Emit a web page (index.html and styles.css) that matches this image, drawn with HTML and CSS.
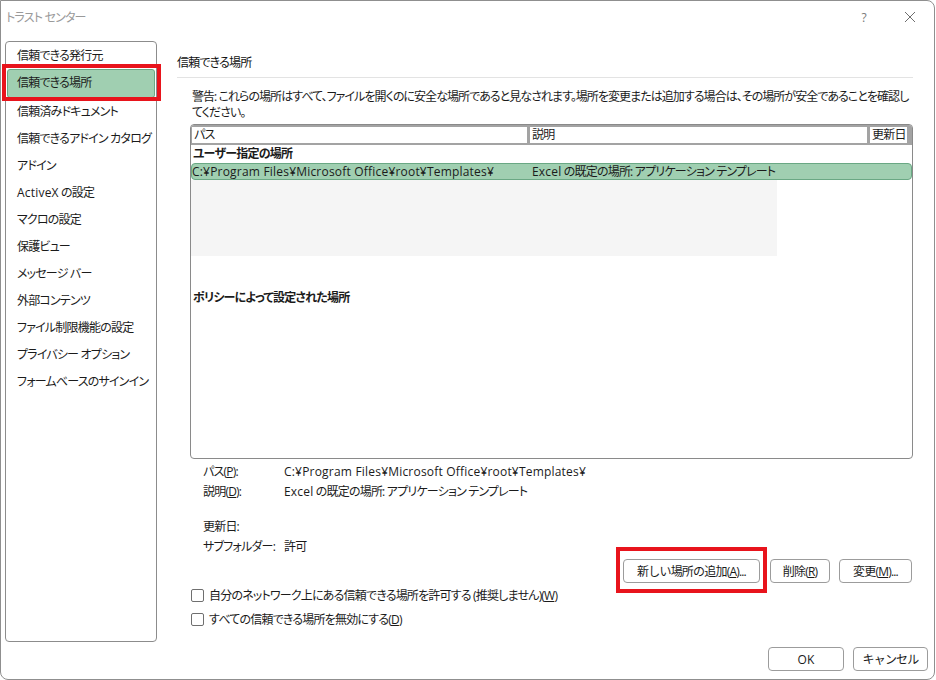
FILE: index.html
```html
<!DOCTYPE html>
<html lang="ja">
<head>
    <meta charset="UTF-8">
    <title>トラスト センター</title>
    <link rel="stylesheet" href="styles.css">
</head>
<body>
    <div class="dialog">
        <div class="titlebar">
            <span class="title">トラスト センター</span>
            <span class="help">?</span>
            <svg class="close" width="12" height="12" viewBox="0 0 12 12">
                <path d="M1 1 L11 11 M11 1 L1 11" stroke="#6e6e6e" stroke-width="1" fill="none"/>
            </svg>
        </div>

        <div class="content">
            <div class="nav">
                <div class="nav-item">信頼できる発行元</div>
                <div class="nav-item selected">信頼できる場所</div>
                <div class="nav-item">信頼済みドキュメント</div>
                <div class="nav-item">信頼できるアドイン カタログ</div>
                <div class="nav-item">アドイン</div>
                <div class="nav-item"><span class="latin">ActiveX</span> の設定</div>
                <div class="nav-item">マクロの設定</div>
                <div class="nav-item">保護ビュー</div>
                <div class="nav-item">メッセージ バー</div>
                <div class="nav-item">外部コンテンツ</div>
                <div class="nav-item">ファイル制限機能の設定</div>
                <div class="nav-item">プライバシー オプション</div>
                <div class="nav-item">フォームベースのサインイン</div>
            </div>

            <div class="main">
                <div class="section-title">信頼できる場所</div>
                <div class="section-body">
                    <p class="warning">警告: これらの場所はすべて、ファイルを開くのに安全な場所であると見なされます。場所を変更または追加する場合は、その場所が安全であることを確認し<br>てください。</p>

                    <div class="list">
                        <div class="list-header">
                            <div class="col">パス</div>
                            <div class="col">説明</div>
                            <div class="col">更新日</div>
                        </div>
                        <div class="group">ユーザー指定の場所</div>
                        <div class="row selected">
                            <span class="cell-path latin">C:¥Program Files¥Microsoft Office¥root¥Templates¥</span>
                            <span class="cell-desc"><span class="latin">Excel</span> の既定の場所: アプリケーション テンプレート</span>
                        </div>
                        <div class="blank"></div>
                        <div class="group policy">ポリシーによって設定された場所</div>
                    </div>

                    <div class="details">
                        <span>パス(<u>P</u>):</span>
                        <span class="latin">C:¥Program Files¥Microsoft Office¥root¥Templates¥</span>
                        <span>説明(<u>D</u>):</span>
                        <span><span class="latin">Excel</span> の既定の場所: アプリケーション テンプレート</span>
                        <span class="gap">更新日:</span>
                        <span class="gap"></span>
                        <span>サブフォルダー:</span>
                        <span>許可</span>
                    </div>

                    <div class="actions">
                        <button class="btn btn-add">新しい場所の追加(<u>A</u>)...</button>
                        <button class="btn btn-delete">削除(<u>R</u>)</button>
                        <button class="btn btn-edit">変更(<u>M</u>)...</button>
                    </div>

                    <div class="check"><span class="box"></span>自分のネットワーク上にある信頼できる場所を許可する (推奨しません)(<u>W</u>)</div>
                    <div class="check"><span class="box"></span>すべての信頼できる場所を無効にする(<u>D</u>)</div>
                </div>
            </div>
        </div>

        <div class="footer">
            <button class="btn btn-ok"><span class="latin">OK</span></button>
            <button class="btn btn-cancel">キャンセル</button>
        </div>

        <!-- 注目枠 -->
        <div class="mark mark-nav"></div>
        <div class="mark mark-add"></div>
    </div>
</body>
</html>
```

FILE: styles.css
```css
body {
    margin: 0;
    background-color: white;
    font-family: "Open Sans", "Noto Sans CJK JP", sans-serif;
    font-size: 12px;
    color: #1b1b1b;
    font-feature-settings: "palt";
    letter-spacing: -0.8px;
}
.latin {
    letter-spacing: 0.2px;
}
.dialog {
    position: relative;
    width: 935px;
    height: 680px;
    box-sizing: border-box;
    border: 1px solid #8f8f8f;
    border-radius: 0 8px 8px 8px;
    background-color: white;
    overflow: hidden;
}
.titlebar {
    display: flex;
    align-items: center;
    height: 32px;
    padding-left: 5px;
}
.title {
    color: #9a9a9a;
    flex: 1;
}
.help {
    color: #7a7a7a;
    margin-right: 38px;
}
.close {
    margin-right: 18px;
}
.content {
    display: flex;
    margin-top: 8px;
    padding-left: 4px;
}
.nav {
    width: 152px;
    height: 601px;
    box-sizing: border-box;
    border: 1px solid #8c8c8c;
    border-radius: 4px;
}
.nav-item {
    height: 27px;
    line-height: 27px;
    padding-left: 11px;
    white-space: nowrap;
}
.nav-item.selected {
    margin: 0 1px;
    padding-left: 9px;
    line-height: 25px;
    background-color: #a0cfb1;
    border: 1px solid #6aa884;
    border-radius: 3px;
}
.main {
    margin-left: 20px;
    width: 736px;
}
.section-title {
    padding: 13px 0 5px;
    line-height: 18px;
    color: #111;
    border-bottom: 1px solid #e3e3e3;
}
.section-body {
    padding-left: 13px;
}
.warning {
    margin: 11px 0 3px;
    padding-left: 2px;
    line-height: 16px;
    letter-spacing: -0.95px;
    white-space: nowrap;
}
.list {
    width: 723px;
    height: 335px;
    box-sizing: border-box;
    border: 1px solid #8a8a8a;
    border-radius: 4px;
}
.list-header {
    display: grid;
    grid-template-columns: 335px 337px 37px;
    column-gap: 3px;
    padding: 2px 0 2px 1px;
    background-color: #a3a3a3;
    border-radius: 3px 3px 0 0;
}
.list-header .col {
    background-color: white;
    line-height: 16px;
    padding-left: 2px;
    white-space: nowrap;
}
.group {
    font-weight: bold;
    line-height: 18px;
    padding-left: 2px;
}
.row {
    display: flex;
    line-height: 15px;
    white-space: nowrap;
}
.row.selected {
    background-color: #a0cfb1;
    border: 1px solid #6aa884;
    border-radius: 4px;
}
.cell-path {
    width: 340px;
}
.blank {
    width: 586px;
    height: 76px;
    background-color: #f5f5f5;
}
.group.policy {
    margin-top: 33px;
}
.details {
    display: grid;
    grid-template-columns: 81px auto;
    margin-top: 3px;
    padding-left: 13px;
    line-height: 20px;
}
.details .gap {
    margin-top: 15px;
}
.actions {
    display: flex;
    justify-content: flex-end;
    gap: 10px;
    margin-top: 2px;
    padding-right: 1px;
}
.btn {
    height: 24px;
    box-sizing: border-box;
    border: 1px solid #9c9c9c;
    border-radius: 4px;
    background-color: white;
    font-family: inherit;
    font-size: 12px;
    letter-spacing: inherit;
    color: #1b1b1b;
    padding: 0;
    white-space: nowrap;
}
.btn-add {
    width: 137px;
}
.btn-delete {
    width: 60px;
}
.btn-edit {
    width: 73px;
    margin-left: -1px;
}
.check {
    display: flex;
    align-items: center;
    height: 24px;
    padding-left: 1px;
    white-space: nowrap;
}
.box {
    width: 11px;
    height: 11px;
    border: 1px solid #6f6f6f;
    border-radius: 2px;
    margin-right: 5px;
}
.footer {
    display: flex;
    justify-content: flex-end;
    gap: 9px;
    margin-top: 5px;
    padding-right: 6px;
}
.btn-ok {
    width: 76px;
}
.btn-cancel {
    width: 75px;
}
.mark {
    position: absolute;
    box-sizing: border-box;
    border: 4px solid #e8141c;
}
.mark-nav {
    left: 1px;
    top: 63px;
    width: 159px;
    height: 37px;
}
.mark-add {
    left: 615px;
    top: 546px;
    width: 151px;
    height: 46px;
}
```
